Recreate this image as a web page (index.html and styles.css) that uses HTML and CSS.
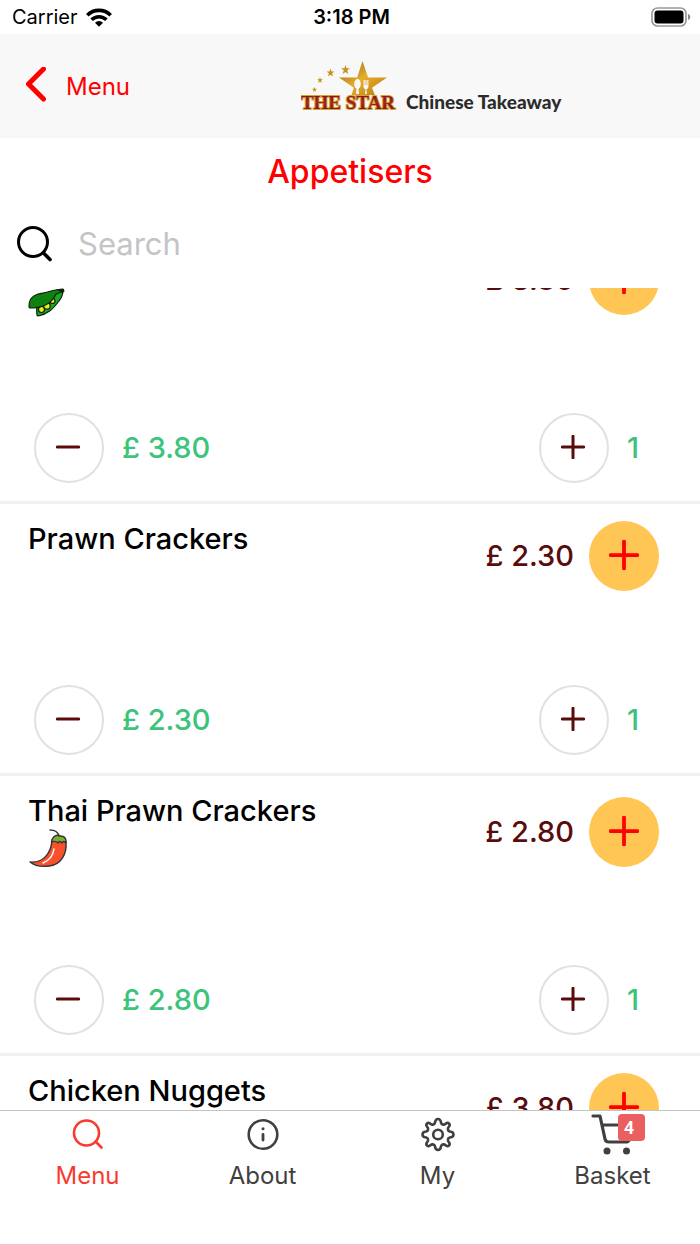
FILE: index.html
```html
<!DOCTYPE html>
<html lang="en">
<head>
<meta charset="utf-8">
<meta name="viewport" content="width=device-width, initial-scale=1">
<title>Appetisers</title>
<link rel="stylesheet" href="styles.css">
</head>
<body>
<svg class="defs" aria-hidden="true">
  <symbol id="plus" viewBox="0 0 24 24"><path d="M12 1.200v21.600M1.200 12h21.600" fill="none" stroke="currentColor" stroke-linecap="round"/></symbol>
  <symbol id="minus" viewBox="0 0 24 24"><path d="M1.200 12h21.600" fill="none" stroke="currentColor" stroke-linecap="round"/></symbol>
  <symbol id="star" viewBox="0 0 20 20"><path d="M10 0l2.500 7.300H20l-6 4.600 2.200 8.100-6.200-4.600L3.800 20 6 11.900 0 7.300h7.500z"/></symbol>
</svg>
<div class="app">
  <div class="status">
    <div class="carrier"><span>Carrier</span>
      <svg class="wifi" viewBox="0 0 26 19" aria-hidden="true"><g fill="none" stroke="#000" stroke-width="3.600"><path d="M1.300 7.200a16.500 16.500 0 0 1 23.400 0"/><path d="M5.600 11.700a10.600 10.600 0 0 1 14.800 0"/></g><path d="M13 18.700l-4-4a5.800 5.800 0 0 1 8 0z"/></svg>
    </div>
    <time class="clock">3:18 PM</time>
    <svg class="battery" viewBox="0 0 40 20" aria-label="Battery full"><rect x="1" y="1" width="34" height="18" rx="5.500" fill="none" stroke="#999" stroke-width="1.700"/><rect x="3.500" y="3.500" width="29" height="13" rx="3"/><path d="M37 7c3 1 3 5 0 6z" fill="#888"/></svg>
  </div>
  <header class="header">
    <button class="back" type="button">
      <svg class="chevron" viewBox="0 0 20 38" aria-hidden="true"><path d="M17.500 2L2.500 17l15 15" fill="none" stroke="#f00" stroke-width="5" stroke-linecap="round" stroke-linejoin="round"/></svg>
      <span>Menu</span>
    </button>
    <div class="brand">
      <svg class="logo" viewBox="0 0 96 54" role="img" aria-label="The Star">
        <defs><linearGradient id="gold" x1="0" y1="0" x2="1" y2="1"><stop offset="0" stop-color="#8c5c10"/><stop offset=".5" stop-color="#e5ae2c"/><stop offset="1" stop-color="#b67712"/></linearGradient>
        <linearGradient id="wine" x1="0" y1="0" x2="0" y2="1"><stop offset="0" stop-color="#6d1512"/><stop offset=".5" stop-color="#a5251a"/><stop offset="1" stop-color="#641413"/></linearGradient></defs>
        <path fill="url(#gold)" d="M61.500 1l5.600 16.500H86L71 27.700l2.800 7.300H50.500l2.300-7.300L38 17.500h18.200z"/>
        <g fill="#f8f8f8"><ellipse cx="56.500" cy="24" rx="3.300" ry="5"/><path d="M55.700 28h1.600l.8 6h-3.200zM62.500 20h1.200v5h.7v-5h1.100v5h.8v-5h1.100v7q0 2-2 2l.5 5H64l.5-5q-2 0-2-2z"/></g>
        <g fill="#c8901f"><use href="#star" x="40" y="5" width="9" height="9"/><use href="#star" x="25.500" y="8.500" width="8" height="8"/><use href="#star" x="16" y="17" width="6" height="6"/><use href="#star" x="11" y="27" width="5" height="5"/></g>
        <text class="logo-text" x="47" y="49" text-anchor="middle">THE STAR</text>
      </svg>
      <span class="brand-name">Chinese Takeaway</span>
    </div>
  </header>
  <h1 class="title">Appetisers</h1>
  <label class="search">
    <svg class="search-icon" viewBox="0 0 36 36" aria-label="Search"><g fill="none" stroke="#000" stroke-width="3" stroke-linecap="round"><circle cx="16" cy="16" r="14.500"/><path d="M26.500 27l6.500 6.500" stroke-width="3.600"/></g></svg>
    <input class="search-input" type="search" placeholder="Search">
  </label>
  <main class="list">
    <ul class="items">
      <li class="item">
        <div class="summary">
          <div><h2 class="name">Vegetable Spring Rolls</h2>
            <svg class="diet" viewBox="0 0 42 42" aria-label="Vegetarian"><g stroke="#102008" stroke-width="1.200" stroke-linejoin="round"><path d="M9 38C8 30 9 28 14 25l21-12q0 6-4 11C25 32 20 37 10 39z" fill="#18a82c"/><circle cx="13.500" cy="32.500" r="3" fill="#e6ee13"/><circle cx="19" cy="29" r="3.200" fill="#e6ee13"/><circle cx="24.500" cy="24" r="2.500" fill="#e6ee13"/><path d="M1 30C1 22 4 19 10 17c9-1 16-5 25-5l1 2-8 3c-5 11-14 14-26 14z" fill="#0d8210"/></g><path d="M28 12l8 .5-1 4-3-2z" fill="#102008"/></svg>
          </div>
          <span class="price">£ 3.80</span>
          <button class="add" type="button" aria-label="Add Vegetable Spring Rolls"><svg class="add-icon"><use href="#plus"/></svg></button>
        </div>
        <div class="controls">
          <button class="step" type="button" aria-label="Remove one"><svg class="step-icon"><use href="#minus"/></svg></button><span class="total">£ 3.80</span>
          <button class="step" type="button" aria-label="Add one"><svg class="step-icon"><use href="#plus"/></svg></button><span class="qty">1</span>
        </div>
      </li>
      <li class="item">
        <div class="summary">
          <h2 class="name">Prawn Crackers</h2>
          <span class="price">£ 2.30</span>
          <button class="add" type="button" aria-label="Add Prawn Crackers"><svg class="add-icon"><use href="#plus"/></svg></button>
        </div>
        <div class="controls">
          <button class="step" type="button" aria-label="Remove one"><svg class="step-icon"><use href="#minus"/></svg></button><span class="total">£ 2.30</span>
          <button class="step" type="button" aria-label="Add one"><svg class="step-icon"><use href="#plus"/></svg></button><span class="qty">1</span>
        </div>
      </li>
      <li class="item">
        <div class="summary">
          <div><h2 class="name">Thai Prawn Crackers</h2>
            <svg class="diet" viewBox="0 0 42 42" aria-label="Spicy"><g stroke="#303638" stroke-width="1.400" stroke-linejoin="round" stroke-linecap="round"><path d="M24 11c4-3 11-2 14 2 1 12-5 23-17 24-7 1-14 0-19-4 13 1 21-8 22-22z" fill="#f8512b"/><path d="M23.500 13c1-6 5-8 9-6 5 0 6 4 5.500 7-2-2-3-2-4 0-2-2-3-2-4 0-2-2-4-2-6.500-1z" fill="#7caf2f"/><path d="M22 1c5 0 8 2 9 6" fill="none"/></g><path d="M26 20c-1 7-6 12-11 14" fill="none" stroke="#fff" stroke-width="1.500" stroke-linecap="round"/></svg>
          </div>
          <span class="price">£ 2.80</span>
          <button class="add" type="button" aria-label="Add Thai Prawn Crackers"><svg class="add-icon"><use href="#plus"/></svg></button>
        </div>
        <div class="controls">
          <button class="step" type="button" aria-label="Remove one"><svg class="step-icon"><use href="#minus"/></svg></button><span class="total">£ 2.80</span>
          <button class="step" type="button" aria-label="Add one"><svg class="step-icon"><use href="#plus"/></svg></button><span class="qty">1</span>
        </div>
      </li>
      <li class="item">
        <div class="summary">
          <h2 class="name">Chicken Nuggets</h2>
          <span class="price">£ 3.80</span>
          <button class="add" type="button" aria-label="Add Chicken Nuggets"><svg class="add-icon"><use href="#plus"/></svg></button>
        </div>
      </li>
    </ul>
  </main>
  <nav class="tabs">
    <a class="tab active" href="#menu">
      <svg class="tab-icon" viewBox="0 0 40 40" aria-hidden="true"><g fill="none" stroke="currentColor" stroke-width="2.600" stroke-linecap="round"><circle cx="18.500" cy="18" r="12.500"/><path d="M27.500 26.500l6 6"/></g></svg>
      <span>Menu</span></a>
    <a class="tab" href="#about">
      <svg class="tab-icon" viewBox="0 0 40 40" aria-hidden="true"><circle cx="20" cy="19.500" r="14.300" fill="none" stroke="currentColor" stroke-width="2.600"/><path d="M20 19.500v5.500" stroke="currentColor" stroke-width="2.800" stroke-linecap="round"/><circle cx="20" cy="13.700" r="1.500" fill="currentColor"/></svg>
      <span>About</span></a>
    <a class="tab" href="#my">
      <svg class="tab-icon" viewBox="0 0 40 40" aria-hidden="true"><g fill="none" stroke="currentColor" stroke-width="2.600" stroke-linejoin="round"><circle cx="20" cy="19.500" r="4.800"/><path d="M20 4C22.200 4 22.800 6 23 7.600Q23.400 9.400 25 9.600Q26.300 9.800 27.600 8.700C29 7.500 30.100 7.600 31 8.500C31.900 9.400 32 10.500 30.800 11.900Q29.700 13.200 29.900 14.500Q30.100 16.100 31.900 16.500C33.500 16.700 35.500 17.300 35.500 19.500C35.500 21.700 33.500 22.300 31.900 22.500Q30.100 22.900 29.900 24.500Q29.700 25.800 30.800 27.100C32 28.500 31.900 29.600 31 30.500C30.100 31.400 29 31.500 27.600 30.300Q26.300 29.200 25 29.400Q23.400 29.600 23 31.400C22.800 33 22.200 35 20 35C17.800 35 17.200 33 17 31.400Q16.600 29.600 15 29.400Q13.700 29.200 12.400 30.300C11 31.500 9.900 31.400 9 30.500C8.100 29.600 8 28.500 9.200 27.100Q10.300 25.800 10.100 24.500Q9.900 22.900 8.100 22.500C6.500 22.300 4.500 21.700 4.500 19.500C4.500 17.300 6.500 16.700 8.100 16.500Q9.900 16.100 10.100 14.500Q10.300 13.200 9.200 11.900C8 10.500 8.100 9.400 9 8.500C9.900 7.600 11 7.500 12.400 8.700Q13.700 9.800 15 9.600Q16.600 9.400 17 7.600C17.200 6 17.800 4 20 4Z"/></g></svg>
      <span>My</span></a>
    <a class="tab" href="#basket">
      <span class="basket"><svg class="tab-icon" viewBox="0 0 40 40" aria-hidden="true"><g fill="none" stroke="currentColor" stroke-width="3.200" stroke-linecap="round" stroke-linejoin="round"><path d="M0 1h7l5 23q.5 3 4 3h16q4 0 5-4M9 10h27"/></g><circle cx="14" cy="36" r="3.500" fill="currentColor"/><circle cx="33.500" cy="36" r="3.500" fill="currentColor"/></svg><span class="badge">4</span></span>
      <span>Basket</span></a>
  </nav>
</div>
</body>
</html>
```
FILE: styles.css
```css
* { box-sizing: border-box; }
body { margin: 0; background: #fff; color: #000; font-family: Inter, "Liberation Sans", sans-serif; }
button { border: 0; padding: 0; background: none; font: inherit; color: inherit; }
svg { display: block; flex: none; }
.defs { position: absolute; width: 0; height: 0; }

.app { display: flex; flex-direction: column; height: 100vh; }

.status { display: grid; grid-template-columns: 1fr auto 1fr; align-items: center; height: 34px; padding: 0 9px 0 12px; font-size: 20px; }
.carrier { display: flex; align-items: center; gap: 8px; }
.wifi { width: 26px; height: 19px; }
.clock { font-size: 20px; font-weight: 600; }
.battery { justify-self: end; width: 40px; height: 20px; }

.header { display: grid; grid-template-columns: 301fr 399fr; align-items: center; height: 104px; background: #f8f8f8; }
.back { display: flex; align-items: center; justify-self: start; gap: 20px; padding-left: 26px; color: #f00; font-size: 24px; }
.chevron { width: 20px; height: 38px; }
.brand { display: flex; align-items: flex-end; gap: 9px; padding-top: 1px; }
.logo { width: 96px; height: 54px; }
.logo-text { font: bold 19px "Liberation Serif", serif; fill: url(#wine); stroke: #d9a03a; stroke-width: 2px; paint-order: stroke; }
.brand-name { color: #2b2b2b; font: 900 19px/24px Lato, sans-serif; }

.title { margin: 0; padding: 15px 0 13px; color: #f00; font-size: 32px; line-height: 38px; font-weight: 500; text-align: center; }
.search { display: flex; align-items: center; gap: 25px; height: 84px; padding: 0 17px 4px; }
.search-icon { width: 36px; height: 36px; }
.search-input { flex: 1; min-width: 0; height: 48px; border: 0; padding: 0 0 2px; outline: 0; background: none; font: 31px Inter, sans-serif; }
.search-input::placeholder { color: #c4c4c6; opacity: 1; }

.list { flex: 1; min-height: 0; overflow: hidden; }
.items { margin: -64px 0 0; padding: 0; list-style: none; }
.item { display: flex; flex-direction: column; gap: 94px; padding: 17px 0 18px; border-bottom: 3px solid #f1f1f1; }
.summary { display: grid; grid-template-columns: 1fr auto 70px; column-gap: 15px; align-items: center; min-height: 70px; padding: 0 41px 0 28px; }
.name { align-self: start; margin: 0; font-size: 29px; line-height: 36px; font-weight: 500; }
.diet { width: 42px; height: 42px; }
.price { padding-bottom: 2px; color: #5a0b0b; font-size: 29px; font-weight: 500; }
.add { display: grid; place-items: center; width: 70px; height: 70px; padding-bottom: 3px; border-radius: 50%; background: #ffc655; color: #f00; }
.add-icon { width: 30px; height: 30px; stroke-width: 3; }
.controls { display: grid; grid-template-columns: 70px 1fr 70px 32px; column-gap: 18px; align-items: center; padding: 0 41px 0 34px; }
.step { display: grid; place-items: center; width: 70px; height: 70px; padding: 0 2px 2px 0; border: 2px solid #dfe2e4; border-radius: 50%; color: #5a0b0b; }
.step-icon { width: 24px; height: 24px; stroke-width: 3; }
.total, .qty { padding-bottom: 1px; color: #3cc47c; font-size: 29px; font-weight: 500; }

.tabs { display: grid; grid-template-columns: repeat(4, 1fr); height: 134px; border-top: 1px solid #c4c4c4; background: #fff; }
.tab { display: flex; flex-direction: column; align-items: center; gap: 5px; padding-top: 4px; color: #404040; font-size: 24px; line-height: 32px; text-decoration: none; }
.active { color: #f83b30; }
.tab-icon { width: 40px; height: 40px; overflow: visible; }
.basket { position: relative; }
.badge { position: absolute; top: -1px; left: 25px; width: 27px; height: 27px; border-radius: 4px; background: #ea5f60; color: #fff; font: 700 17px/27px "Open Sans", sans-serif; padding-right: 4px; text-align: center; }
```
